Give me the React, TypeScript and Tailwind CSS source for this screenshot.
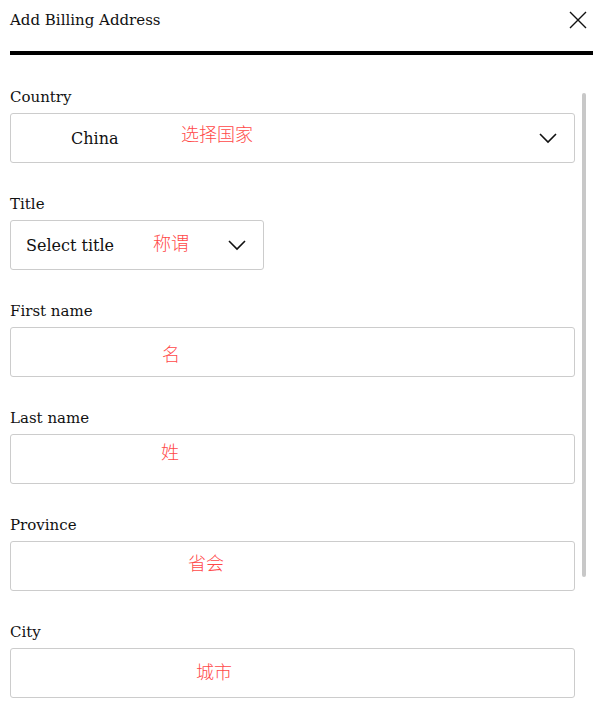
import React from "react";

const serif = { fontFamily: '"DejaVu Serif", "Noto Sans CJK SC", serif' };

function Chevron() {
  return (
    <svg width="20" height="12" viewBox="0 0 20 12" fill="none" stroke="#111" strokeWidth="1.6">
      <path d="M2 2 L10 10 L18 2" />
    </svg>
  );
}

function Field({
  label,
  children,
  width = "w-full",
}: {
  label: string;
  children?: React.ReactNode;
  width?: string;
}) {
  return (
    <div className="flex flex-col">
      <div className="text-[15px] leading-[22px] text-[#111] mb-[5px]">{label}</div>
      <div className={`relative h-[50px] ${width} border border-[#cccccc] rounded-[3px]`}>{children}</div>
    </div>
  );
}

function Note({ text, className }: { text: string; className: string }) {
  return (
    <span
      className={`absolute text-[18px] leading-none text-[#ff4848] ${className}`}
      style={{ fontFamily: '"Noto Sans CJK SC", sans-serif', fontWeight: 300 }}
    >
      {text}
    </span>
  );
}

export default function App() {
  return (
    <div className="w-[593px] h-[705px] overflow-hidden bg-white" style={serif}>
      <div className="flex items-center justify-between pl-[10px] pr-[6px] h-[40px]">
        <span className="text-[15px] text-[#111]">Add Billing Address</span>
        <svg width="18" height="18" viewBox="0 0 18 18" stroke="#111" strokeWidth="1.4">
          <path d="M1 1 L17 17 M17 1 L1 17" />
        </svg>
      </div>
      <div className="ml-[10px] mt-[11px] h-[4px] bg-black" />
      <div className="flex pl-[10px] pt-[31px]">
        <div className="flex-1 flex flex-col gap-[30px]">
          <Field label="Country">
            <div className="flex items-center h-full pl-[60px] pr-[16px] justify-between">
              <span className="text-[16px] text-[#111] pt-[2px]">China</span>
              <Chevron />
            </div>
            <Note text="选择国家" className="left-[170px] top-[10px]" />
          </Field>
          <Field label="Title" width="w-[254px]">
            <div className="flex items-center h-full pl-[15px] pr-[16px] justify-between">
              <span className="text-[16px] text-[#111] pt-[2px]">Select title</span>
              <Chevron />
            </div>
            <Note text="称谓" className="left-[142px] top-[12px]" />
          </Field>
          <Field label="First name">
            <Note text="名" className="left-[151px] top-[16px]" />
          </Field>
          <Field label="Last name">
            <Note text="姓" className="left-[150px] top-[7px]" />
          </Field>
          <Field label="Province">
            <Note text="省会" className="left-[177px] top-[11px]" />
          </Field>
          <Field label="City">
            <Note text="城市" className="left-[185px] top-[13px]" />
          </Field>
        </div>
        <div className="w-[18px] flex justify-center">
          <div className="w-[4px] h-[484px] mt-[7px] rounded-full bg-[#c8c8c8]" />
        </div>
      </div>
    </div>
  );
}
